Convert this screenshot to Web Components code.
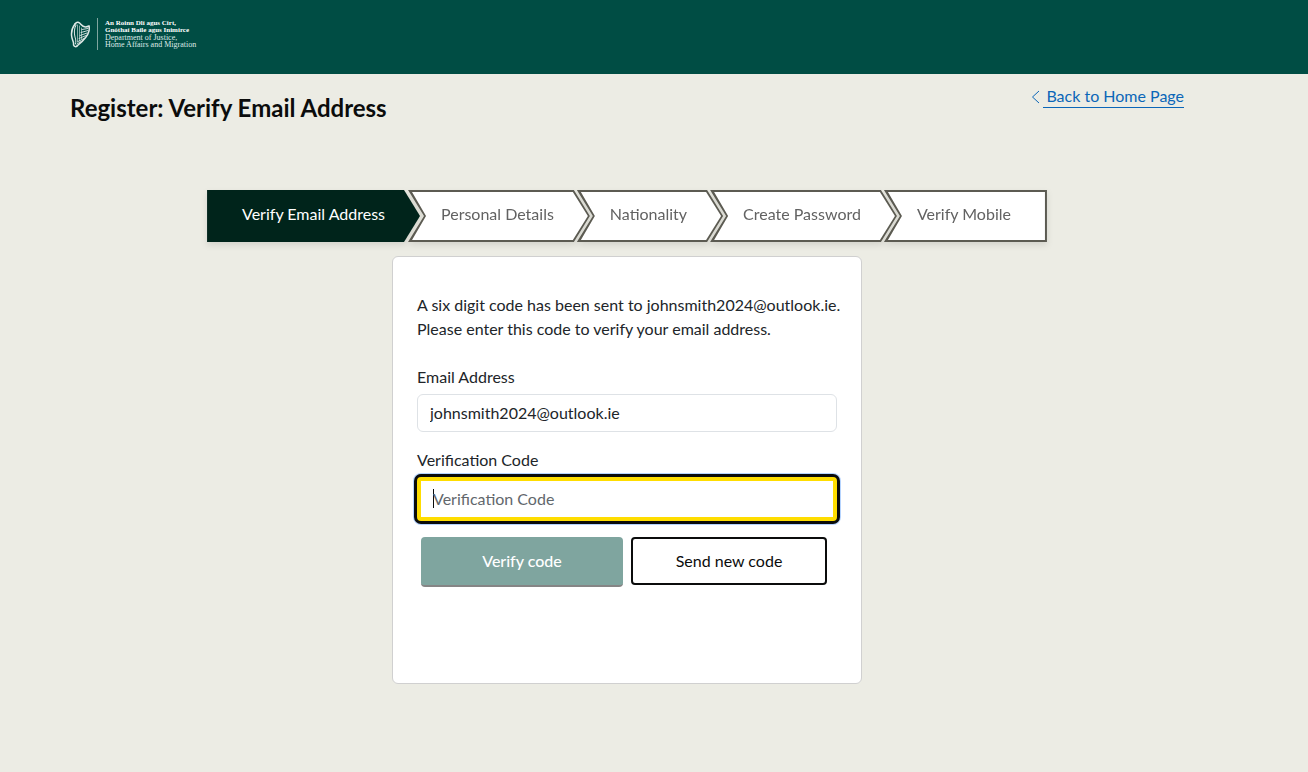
<!DOCTYPE html>
<html lang="en">
<head>
<meta charset="utf-8">
<title>Register: Verify Email Address</title>
<style>
body { margin: 0; min-height: 100vh; background: #ecece4; color: #212529; font: 16px/24px Lato, sans-serif; }
</style>
</head>
<body>
<register-page></register-page>
<script>
const define = (name, html) => {
  const template = document.createElement('template');
  template.innerHTML = html;
  customElements.define(name, class extends HTMLElement {
    constructor() {
      super();
      this.attachShadow({ mode: 'open' }).append(template.content.cloneNode(true));
    }
  });
};

define('department-logo', `
<style>
:host { display: flex; align-items: center; gap: 7px; color: #fff; }
svg { display: block; width: 20px; height: 28px; }
.rule { width: 1px; height: 32px; background: #7fa59f; }
.name { font: 7px/7px "Liberation Serif", serif; white-space: nowrap; }
b, span { display: block; }
span { font-size: 8px; color: #dfe9e7; }
</style>
<svg viewBox="0 0 20 28" fill="none" stroke="#dfe9e7" stroke-linecap="round" aria-hidden="true">
  <path d="M5 4C7 1 9 2 11 4.500C13 7 16 7.500 19 6C20 9 18.500 14 16 17C13 21 11 23 7 26" stroke-width="1.500"/>
  <path d="M5 4C2 8 1 14 2 18C3 22 4 22 3.500 25C4.500 27 6 27 7 26" stroke-width="1.500"/>
  <path d="M6 5C4 9 4 13 5 17C6 20 6 22 5.500 24" stroke-width="1"/>
  <path d="M7.500 5v17M9.500 6v15M11.500 8v11" stroke-width=".6"/>
  <path d="M12 9.500l6-1M11 12.500l7-2M10 15.500l7-2.500M9 18.500l7-3M8 21.500l6-3M7 24l4-2.500" stroke-width=".9"/>
</svg>
<div class="rule"></div>
<div class="name"><b>An Roinn Dlí agus Cirt,</b><b>Gnóthaí Baile agus Inimirce</b><span>Department of Justice,</span><span>Home Affairs and Migration</span></div>`);

define('site-header', `
<style>
:host { display: block; background: #004d44; padding: 18px 124px 24px 70px; }
</style>
<slot></slot>`);

define('back-link', `
<style>
:host { display: flex; align-items: center; gap: 3px; }
svg { display: block; width: 9px; height: 14px; }
a { display: block; padding: 0 0 0 3px; color: #0b66b8; text-decoration: none; line-height: 22px; border-bottom: 1px solid #0b66b8; }
</style>
<svg viewBox="0 0 9 14" fill="none" stroke="#0b66b8" aria-hidden="true"><path d="M8 1L1.500 7L8 13"/></svg>
<a href="#"><slot></slot></a>`);

define('step-list', `
<style>
:host { display: flex; justify-content: center; filter: drop-shadow(0 3px 3px rgba(0,0,0,.1)); }
</style>
<slot></slot>`);

define('step-item', `
<style>
:host { display: block; margin-left: -13px; }
.edge { position: relative; padding: 12px 36px 16px 33px; color: #626262; background: #5c5b52; white-space: nowrap;
  clip-path: polygon(0 0, calc(100% - 16px) 0, 100% 50%, calc(100% - 16px) 100%, 0 100%, 16px 50%); }
.edge::before { content: ""; position: absolute; inset: 0; background: #fff;
  clip-path: polygon(4px 2px, calc(100% - 17px) 2px, calc(100% - 2px) 50%, calc(100% - 17px) calc(100% - 2px), 4px calc(100% - 2px), 18px 50%); }
.label { position: relative; }
:host([current]) { margin-left: 0; margin-right: 1px; }
:host([current]) .edge { padding: 12px 35px 16px; color: #fff; background: #00241b;
  clip-path: polygon(0 0, calc(100% - 16px) 0, 100% 50%, calc(100% - 16px) 100%, 0 100%); }
:host([current]) .edge::before { display: none; }
:host([last]) .edge { clip-path: polygon(0 0, 100% 0, 100% 100%, 0 100%, 16px 50%); }
:host([last]) .edge::before { clip-path: polygon(4px 2px, calc(100% - 2px) 2px, calc(100% - 2px) calc(100% - 2px), 4px calc(100% - 2px), 18px 50%); }
</style>
<div class="edge"><span class="label"><slot></slot></span></div>`);

define('verify-card', `
<style>
:host { display: block; box-sizing: border-box; max-width: 470px; min-height: 428px; margin: 14px auto 0; padding: 36px 24px 24px;
  background: #fff; border: 1px solid #d0d0d0; border-radius: 6px; }
p { margin: 0 -8px 24px 0; }
label { display: block; margin-bottom: 5px; }
input { display: block; box-sizing: border-box; width: 100%; font: inherit; color: #212529; background-color: #fff; outline: 0; }
#email { height: 38px; margin-bottom: 16px; padding: 0 12px 2px; border: 1px solid #dee2e6; border-radius: 6px; }
#code { height: 44px; padding: 0 12px 2px; border: 4px solid #ffdd00; border-radius: 4px;
  box-shadow: 0 0 0 3px #0b0c0c, 0 0 0 4px #b6d4fe;
  background: linear-gradient(#0b0c0c, #0b0c0c) 12px 8px / 1px 19px no-repeat #fff; }
#code::placeholder { color: #62676c; opacity: 1; }
.actions { display: flex; align-items: flex-start; gap: 8px; margin: 16px 10px 0 4px; }
button { box-sizing: border-box; height: 48px; padding: 0; font: inherit; border-radius: 4px; }
.primary { flex: 1 1 202px; height: 50px; color: #fff; background: #7fa59f; border: 0; border-bottom: 2px solid #858585; font-weight: 500; }
.secondary { flex: 1 1 196px; color: #0b0c0c; background: #fff; border: 2px solid #0b0c0c; }
</style>
<form>
<p>A six digit code has been sent to johnsmith2024@outlook.ie. Please enter this code to verify your email address.</p>
<label for="email">Email Address</label>
<input id="email" type="email" value="johnsmith2024@outlook.ie" readonly>
<label for="code">Verification Code</label>
<input id="code" type="text" placeholder="Verification Code" autocomplete="one-time-code">
<div class="actions"><button class="primary" type="button">Verify code</button><button class="secondary" type="button">Send new code</button></div>
</form>`);

define('register-page', `
<style>
:host { display: block; }
main { padding: 11px 124px 24px 70px; }
.title { display: flex; justify-content: space-between; align-items: flex-start; margin-bottom: 66px; }
h1 { margin: 7px 0 0; font-size: 24px; line-height: 32px; font-weight: 700; color: #0b0c0c; }
</style>
<site-header><department-logo></department-logo></site-header>
<main>
<div class="title"><h1>Register: Verify Email Address</h1><back-link>Back to Home Page</back-link></div>
<step-list>
<step-item current>Verify Email Address</step-item>
<step-item>Personal Details</step-item>
<step-item>Nationality</step-item>
<step-item>Create Password</step-item>
<step-item last>Verify Mobile</step-item>
</step-list>
<verify-card></verify-card>
</main>`);
</script>
</body>
</html>
